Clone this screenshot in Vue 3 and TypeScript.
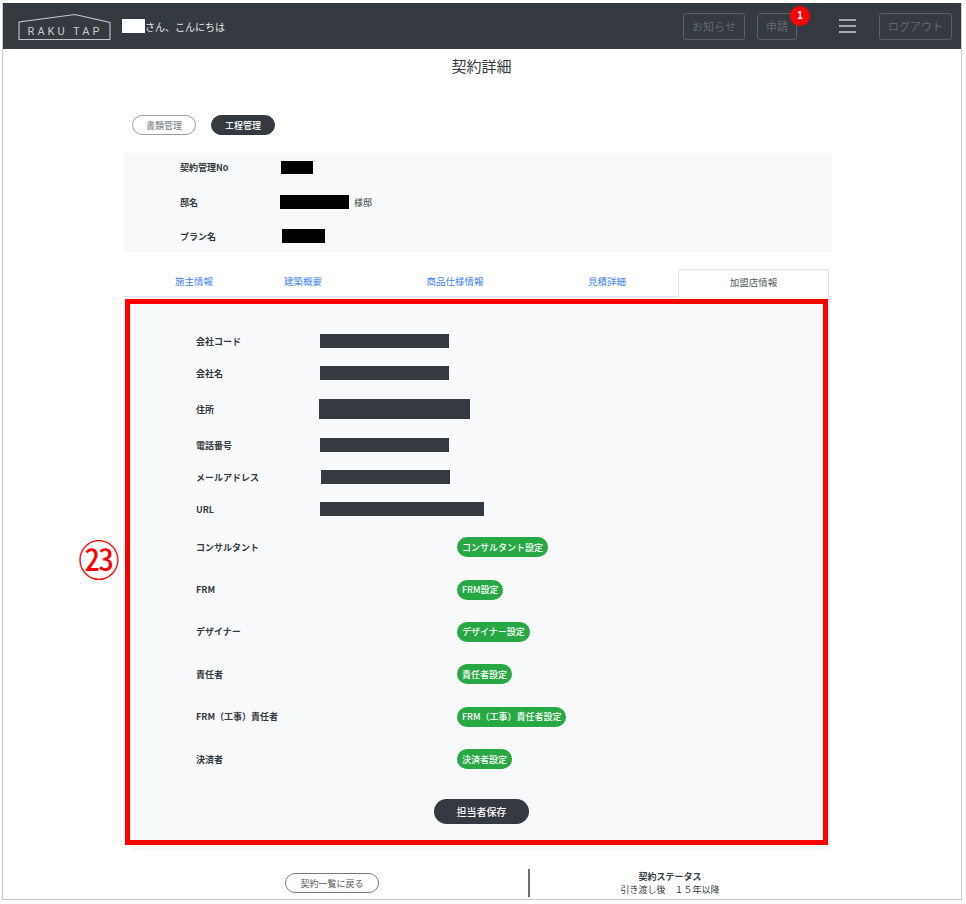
<script setup lang="ts">
interface Row { label: string; width: number; offset: number; height: number; cls: string }
const dataRows: Row[] = [
  { label: '会社コード', width: 129, offset: 0, height: 14, cls: 'h32' },
  { label: '会社名', width: 129, offset: 0, height: 14, cls: 'h32' },
  { label: '住所', width: 151, offset: -1, height: 20, cls: 'h40' },
  { label: '電話番号', width: 129, offset: 0, height: 14, cls: 'h32' },
  { label: 'メールアドレス', width: 129, offset: 1, height: 14, cls: 'h32' },
  { label: 'URL', width: 164, offset: 0, height: 14, cls: 'h32' },
]
const staffRows = [
  { label: 'コンサルタント', action: 'コンサルタント設定' },
  { label: 'FRM', action: 'FRM設定' },
  { label: 'デザイナー', action: 'デザイナー設定' },
  { label: '責任者', action: '責任者設定' },
  { label: 'FRM（工事）責任者', action: 'FRM（工事）責任者設定' },
  { label: '決済者', action: '決済者設定' },
]
const tabs = [
  { label: '施主情報', width: 140 },
  { label: '建築概要', width: 78 },
  { label: '商品仕様情報', width: 226 },
  { label: '見積詳細', width: 78 },
]
</script>

<template>
  <div class="frame">
    <header class="topbar">
      <svg class="logo" width="94" height="28" viewBox="0 0 94 28" aria-label="RAKU TAP">
        <path d="M1 26.5V9L57 1.5 92 9.5V26.5H1Z" fill="none" stroke="#c4c7ca" stroke-width="1.1" />
        <text x="47" y="21.5" text-anchor="middle" class="logo-text">RAKU TAP</text>
      </svg>
      <span class="user-mask"></span>
      <span class="greeting">さん、こんにちは</span>
      <div class="top-actions">
        <button class="top-btn notice">お知らせ</button>
        <div class="apply-wrap">
          <button class="top-btn apply">申請</button>
          <span class="badge">1</span>
        </div>
        <span class="burger"><i></i><i></i><i></i></span>
        <button class="top-btn logout">ログアウト</button>
      </div>
    </header>

    <h1 class="title">契約詳細</h1>

    <main class="content">
      <div class="mode-switch">
        <button class="pill outline">書類管理</button>
        <button class="pill dark">工程管理</button>
      </div>

      <section class="summary">
        <div class="summary-row r1">
          <span class="summary-label">契約管理No</span>
          <span class="black b1"></span>
        </div>
        <div class="summary-row r2">
          <span class="summary-label">邸名</span>
          <span class="black b2"></span>
          <span class="suffix">様邸</span>
        </div>
        <div class="summary-row r3">
          <span class="summary-label">プラン名</span>
          <span class="black b3"></span>
        </div>
      </section>

      <nav class="tabs">
        <a v-for="t in tabs" :key="t.label" class="tab" :style="{ width: t.width + 'px' }">{{ t.label }}</a>
        <span class="tab-space"></span>
        <a class="tab active">加盟店情報</a>
      </nav>

      <div class="panel-bg">
        <section class="panel">
          <div v-for="r in dataRows" :key="r.label" class="data-row" :class="r.cls">
            <span class="field-label">{{ r.label }}</span>
            <span class="mask" :style="{ width: r.width + 'px', height: r.height + 'px', marginLeft: r.offset + 'px' }"></span>
          </div>
          <div class="staff">
            <div v-for="s in staffRows" :key="s.label" class="staff-row">
              <span class="field-label staff-label">{{ s.label }}</span>
              <button class="green">{{ s.action }}</button>
            </div>
          </div>
          <div class="save-wrap"><button class="save">担当者保存</button></div>
        </section>
      </div>
    </main>

    <footer class="bottom">
      <div class="bottom-left"><button class="back">契約一覧に戻る</button></div>
      <div class="bottom-right">
        <strong>契約ステータス</strong>
        <span>引き渡し後　１５年以降</span>
      </div>
    </footer>

    <div class="callout">㉓</div>
  </div>
</template>

<style>
html, body { margin: 0; background: #fff; }
</style>

<style scoped>
* { box-sizing: border-box; }
button { font-family: inherit; cursor: pointer; }
.frame {
  position: relative;
  width: 960px;
  height: 897px;
  margin: 3px 0 0 2px;
  border: 1px solid #c9c9c9;
  border-top: 0;
  overflow: hidden;
  background: #fff;
  font-family: "Noto Sans CJK JP", "Noto Sans", sans-serif;
  color: #343a40;
}
.topbar {
  height: 46px;
  background: #343a40;
  display: flex;
  align-items: center;
  padding: 0 9px 0 15px;
}
.logo { flex: none; margin-top: 1px; }
.logo-text { font: 11px "Roboto", sans-serif; letter-spacing: 3px; fill: #c9ccce; }
.user-mask { width: 23px; height: 14px; background: #fff; margin: 0 0 0 10px; }
.greeting { font-size: 10px; color: #e6e7e8; }
.top-actions { margin-left: auto; display: flex; align-items: center; }
.top-btn {
  height: 27px;
  background: transparent;
  border: 1px solid #585e64;
  border-radius: 3px;
  color: #62686e;
  font-size: 11px;
  padding: 0;
}
.notice { width: 62px; }
.apply-wrap { position: relative; margin-left: 12px; }
.apply { width: 40px; display: block; }
.badge {
  position: absolute;
  left: 33px;
  top: -7px;
  width: 20px;
  height: 20px;
  border-radius: 50%;
  background: #f00;
  color: #fff;
  font: bold 10px/20px "Liberation Sans", sans-serif;
  text-align: center;
}
.burger { width: 17px; margin-left: 42px; display: flex; flex-direction: column; gap: 4px; }
.burger i { display: block; height: 2px; background: #a5a8aa; }
.logout { width: 73px; margin-left: 23px; }
.title {
  margin: 7px 0 0;
  height: 20px;
  font-size: 15px;
  line-height: 20px;
  font-weight: 400;
  text-align: center;
  padding-right: 1px;
  color: #343a40;
}
.content { width: 708px; margin: 0 0 0 121px; }
.mode-switch { display: flex; gap: 15px; padding: 39px 0 0 8px; height: 77px; }
.pill { height: 20px; border-radius: 10px; font-size: 9px; padding: 0; width: 64px; font-weight: 500; }
.pill.outline { background: #fff; border: 1px solid #9a9ea2; color: #888c90; }
.pill.dark { background: #343a40; border: 1px solid #343a40; color: #fff; }
.summary {
  height: 99px;
  background: #f8f9fa;
  display: flex;
  flex-direction: column;
}
.summary-row { display: flex; align-items: center; padding-left: 56px; }
.r1 { height: 29px; }
.r2 { height: 40px; }
.r3 { height: 28px; }
.summary-label { width: 101px; font-size: 9px; font-weight: 700; color: #343a40; }
.black { display: block; background: #000; height: 14px; }
.b1 { width: 32px; height: 13px; }
.b2 { width: 69px; margin-left: -1px; }
.b3 { width: 43px; height: 14px; margin-left: 1px; }
.suffix { margin-left: 5px; font-size: 9px; color: #343a40; }
.tabs { display: flex; height: 28px; margin-top: 17px; border-bottom: 1px solid #dee2e6; width: 708px; padding-right: 3px; }
.tab { font-size: 9.5px; line-height: 25px; text-align: center; color: #3f7ff0; flex: none; }
.tab-space { flex: 1; }
.tab.active {
  width: 151px;
  height: 28px;
  background: #fff;
  color: #555b61;
  border: 1px solid #dee2e6;
  border-bottom: 0;
  border-radius: 3px 3px 0 0;
}
.panel-bg {
  background: #f8f9fa;
  height: 554px;
  width: 698px;
  margin-left: 8px;
  padding-top: 2px;
  border-radius: 4px;
}
.panel {
  width: 703px;
  height: 546px;
  margin-left: -7px;
  border: 5px solid #f00;
  background: #f8f9fa;
  padding: 21px 0 0 66px;
}
.data-row { display: flex; align-items: center; }
.h32 { height: 32px; }
.h40 { height: 40px; }
.field-label { width: 124px; font-size: 9px; font-weight: 700; color: #343a40; flex: none; }
.mask { display: block; background: #343a40; }
.staff { margin-top: 1px; }
.staff-row { display: flex; align-items: center; height: 42.4px; }
.staff-label { width: 261px; }
.green {
  height: 20px;
  border-radius: 10px;
  border: 0;
  background: #28a745;
  color: #fff;
  font-size: 9px;
  font-weight: 500;
  padding: 0 5px;
  white-space: nowrap;
}
.save-wrap { padding: 19px 0 0 238px; }
.save {
  display: block;
  width: 95px;
  height: 25px;
  border-radius: 13px;
  border: 0;
  background: #343a40;
  color: #fff;
  font-size: 10px;
  font-weight: 500;
  padding: 0;
}
.bottom { display: flex; margin-top: 18px; height: 28px; }
.bottom-left { width: 527px; padding: 4px 0 0 282px; border-right: 2px solid #6b6f73; }
.back {
  display: block;
  width: 94px;
  height: 20px;
  border-radius: 10px;
  background: #fff;
  border: 1px solid #777b7f;
  color: #555;
  font-size: 9px;
  padding: 0;
}
.bottom-right {
  width: 280px;
  display: flex;
  flex-direction: column;
  align-items: center;
  font-size: 9px;
  line-height: 13px;
  padding-top: 1px;
  color: #343a40;
}
.bottom-right strong { font-weight: 700; }
.callout {
  position: absolute;
  left: 71px;
  top: 530px;
  width: 50px;
  height: 50px;
  font-size: 42px;
  line-height: 50px;
  text-align: center;
  color: #f00;
}
</style>
